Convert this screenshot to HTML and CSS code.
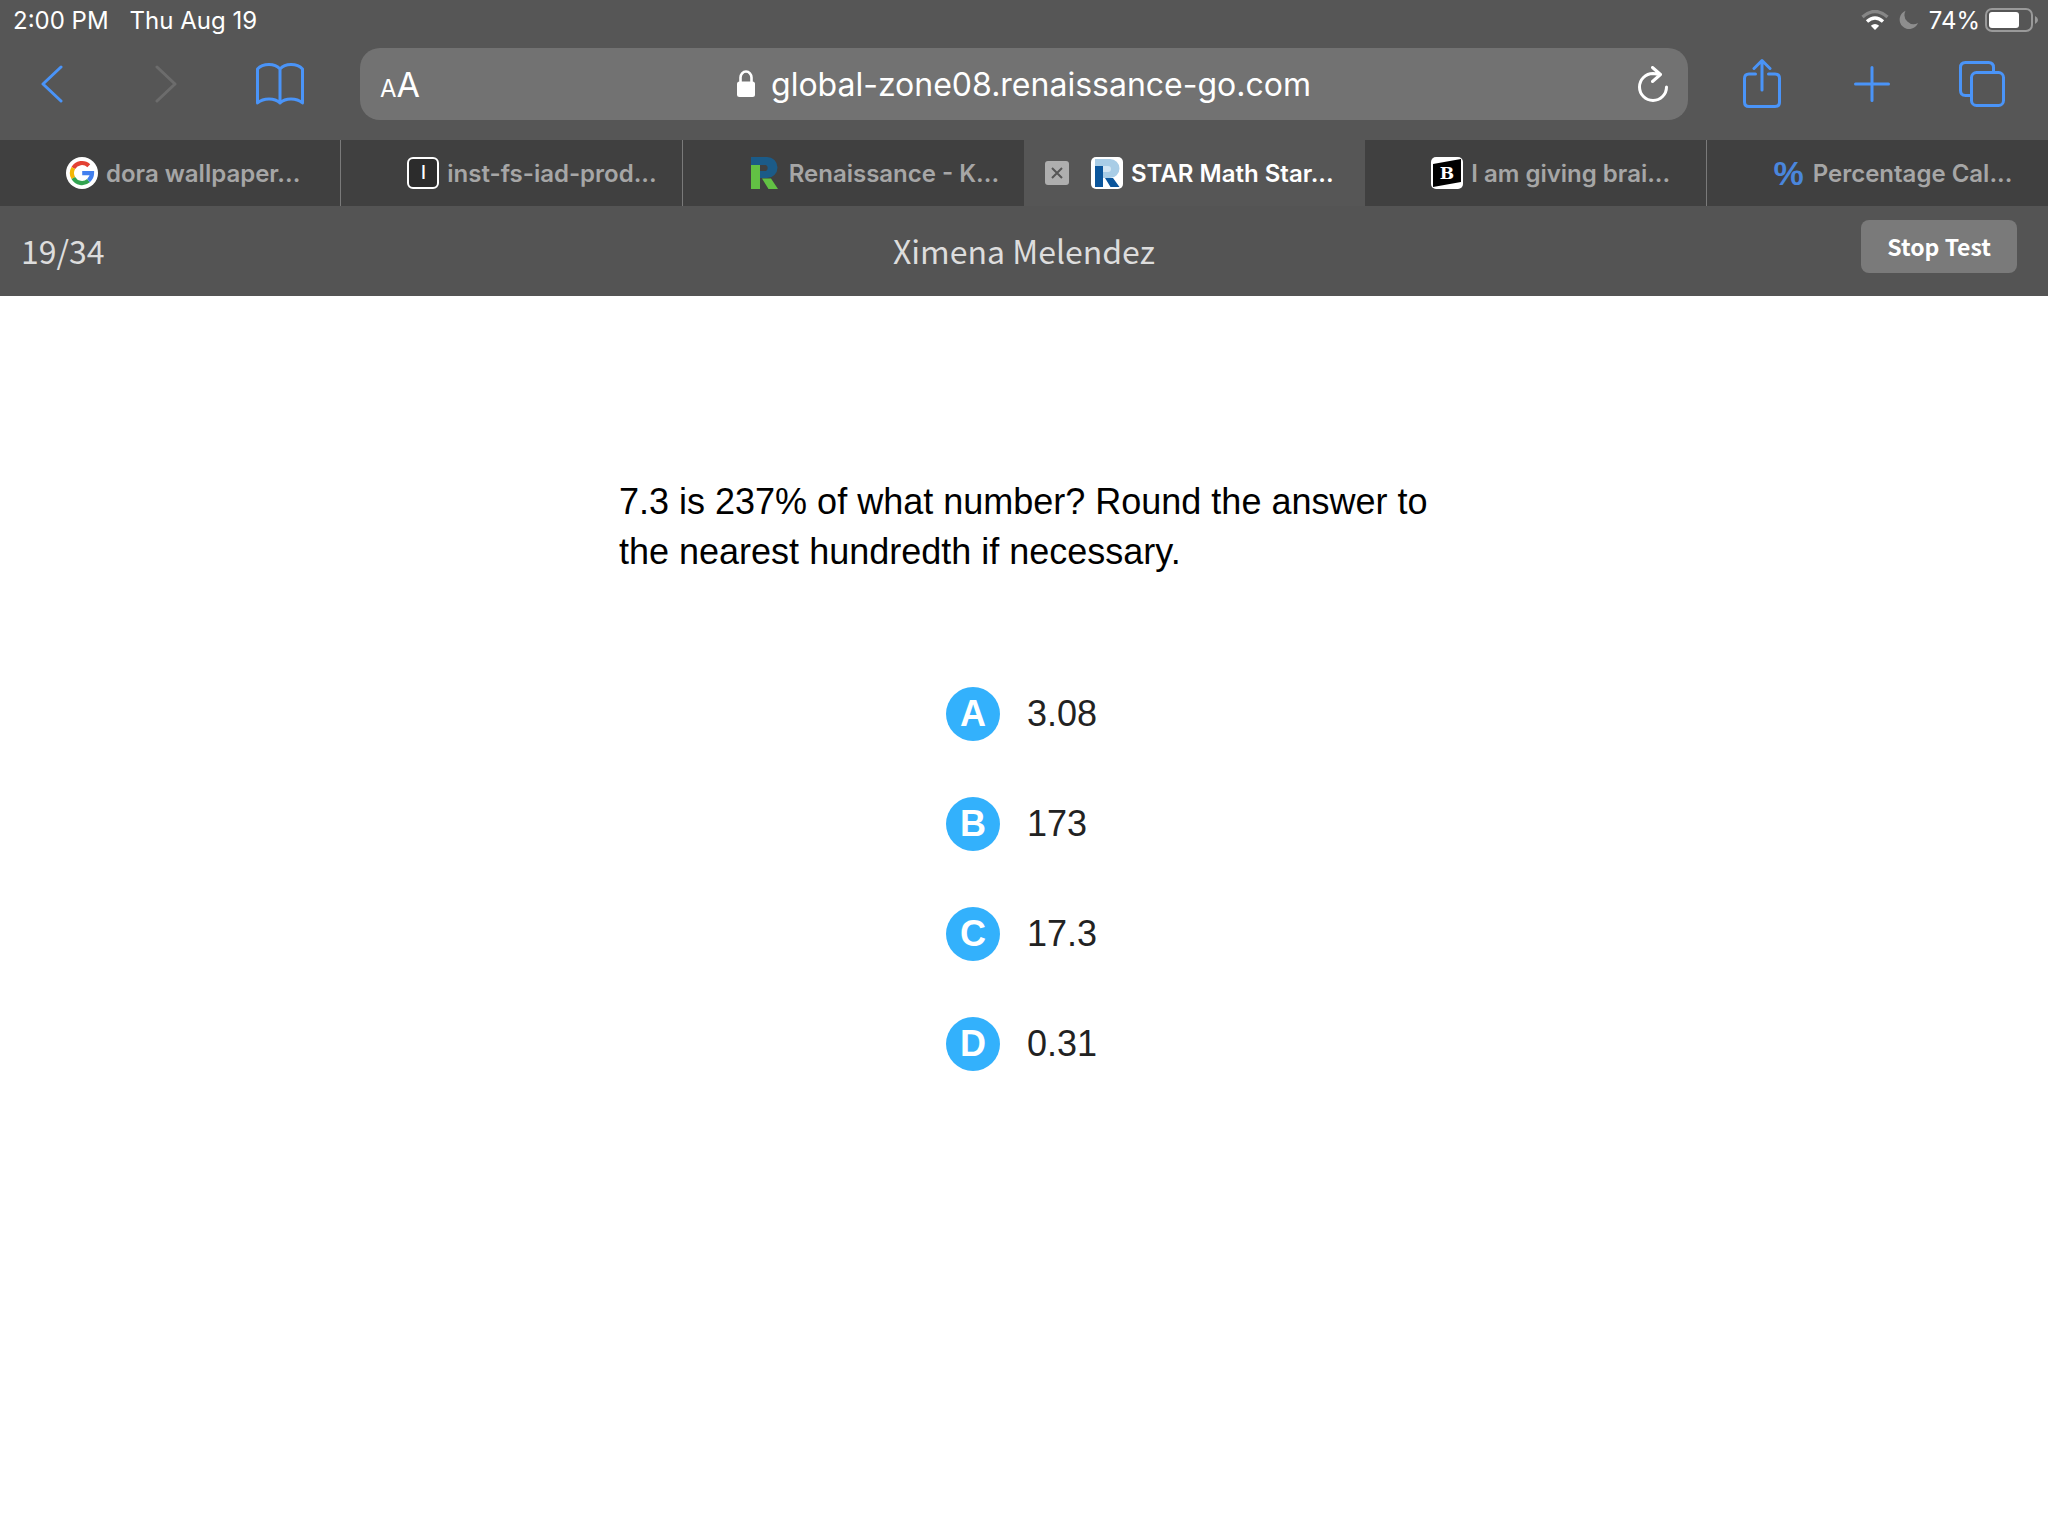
FILE: index.html
```
<!DOCTYPE html>
<html lang="en">
<head>
    <meta charset="UTF-8">
    <title>STAR Math</title>
    <link rel="stylesheet" href="styles.css">
</head>
<body>
    <div class="status-bar">
        <span>2:00 PM</span>
        <span>Thu Aug 19</span>
        <div class="status-icons">
            <svg width="28" height="20" viewBox="0 0 28 20">
                <path d="M1.500 7 Q14 -4 26.500 7" fill="none" stroke="#868686" stroke-width="3.400"/>
                <path d="M6 11.500 Q14 4.500 22 11.500" fill="none" stroke="#fff" stroke-width="3.400"/>
                <path d="M14 20 L9.800 15.800 Q14 12.200 18.200 15.800 Z" fill="#fff"/>
            </svg>
            <svg width="20" height="20" viewBox="0 0 20 20">
                <path d="M6.500 .8 A9.500 9.500 0 1 0 19 13 A9.200 9.200 0 0 1 6.500 .8 Z" fill="#8e8e8e"/>
            </svg>
            <span class="battery-level">74%</span>
            <svg width="54" height="24" viewBox="0 0 54 24">
                <rect x="1" y="1" width="46" height="22" rx="6" fill="none" stroke="#9a9a9a" stroke-width="2"/>
                <rect x="4" y="4" width="30" height="16" rx="3" fill="#fff"/>
                <path d="M50 8 Q53 9.500 53 12 Q53 14.500 50 16 Z" fill="#9a9a9a"/>
            </svg>
        </div>
    </div>

    <div class="toolbar">
        <div class="toolbar-group">
            <button class="tool-btn" title="Back">
                <svg width="22" height="38" viewBox="0 0 22 38"><path d="M20 2 L2 19 L20 36"/></svg>
            </button>
            <button class="tool-btn" title="Forward" disabled>
                <svg width="22" height="38" viewBox="0 0 22 38"><path d="M2 2 L20 19 L2 36"/></svg>
            </button>
            <button class="tool-btn" title="Bookmarks">
                <svg width="48" height="42" viewBox="0 0 48 42">
                    <path d="M24 40 V6 Q20 1.500 13 1.500 Q5.500 1.500 1.500 6 V40 Q6 36 13 36 Q20 36 24 40 Q28 36 35 36 Q42 36 46.500 40 V6 Q42.500 1.500 35 1.500 Q28 1.500 24 6"/>
                </svg>
            </button>
        </div>
        <form class="address-bar">
            <button class="address-btn" type="button" title="Text size"><span class="small-a">A</span>A</button>
            <div class="address">
                <svg width="18" height="28" viewBox="0 0 18 28">
                    <path d="M3.500 13 V7.500 A5.500 6 0 0 1 14.500 7.500 V13" fill="none" stroke="#fff" stroke-width="2.600"/>
                    <rect x="0" y="11.500" width="18" height="15.500" rx="2.500" fill="#fff"/>
                </svg>
                <input class="address-input" type="text" aria-label="Address" value="global-zone08.renaissance-go.com">
            </div>
            <button class="address-btn reload" type="button" title="Reload">
                <svg width="30" height="36" viewBox="0 0 30 36">
                    <path d="M28.500 21 A13.500 13.500 0 1 1 15 7.500 L22 8.500 M14.500 1.500 L22.500 8.500 L14.500 15.500"/>
                </svg>
            </button>
        </form>
        <div class="toolbar-group right">
            <button class="tool-btn" title="Share">
                <svg width="38" height="52" viewBox="0 0 38 52">
                    <path d="M12.500 16 H6 Q1.500 16 1.500 20.500 V44 Q1.500 48.500 6 48.500 H32 Q36.500 48.500 36.500 44 V20.500 Q36.500 16 32 16 H25.500 M19 32 V3 M11 10.500 L19 2.500 L27 10.500"/>
                </svg>
            </button>
            <button class="tool-btn" title="New tab">
                <svg width="36" height="36" viewBox="0 0 36 36"><path d="M18 1.500 V34.500 M1.500 18 H34.500"/></svg>
            </button>
            <button class="tool-btn" title="Show tabs">
                <svg width="46" height="46" viewBox="0 0 46 46">
                    <path d="M12 34.500 H6.500 Q1.500 34.500 1.500 29.500 V6.500 Q1.500 1.500 6.500 1.500 H29.500 Q34.500 1.500 34.500 6.500 V11.500"/>
                    <rect x="12.500" y="11.500" width="32" height="33" rx="5"/>
                </svg>
            </button>
        </div>
    </div>

    <nav class="tabs">
        <div class="tab">
            <a class="tab-link" href="#">
                <svg width="32" height="32" viewBox="0 0 32 32">
                    <circle cx="16" cy="16" r="16" fill="#fff"/>
                    <g fill="none" stroke-width="4.200">
                        <path d="M7.300 11 A10 10 0 0 1 22.800 8.700" stroke="#e34133"/>
                        <path d="M7.300 21 A10 10 0 0 1 7.300 11" stroke="#f3b605"/>
                        <path d="M22.500 23.600 A10 10 0 0 1 7.300 21" stroke="#32a350"/>
                        <path d="M16.200 16.200 H26 A10 10 0 0 1 22.500 23.600" stroke="#4280ef"/>
                    </g>
                </svg>
                <span>dora wallpaper...</span>
            </a>
        </div>
        <div class="tab">
            <a class="tab-link" href="#">
                <span class="letter-icon">I</span>
                <span>inst-fs-iad-prod...</span>
            </a>
        </div>
        <div class="tab before-active">
            <a class="tab-link" href="#">
                <svg width="32" height="32" viewBox="0 0 32 32">
                    <path d="M2 0 H18 A10.500 10.500 0 0 1 18 21 H11 V14 H17 A3.500 3.500 0 0 0 17 8 H2 Z" fill="#1b5b88"/>
                    <path d="M2 8 H11 V32 H2 Z M13 21.500 H22 L29 32 H19.500 Z" fill="#62c144"/>
                </svg>
                <span>Renaissance - K...</span>
            </a>
        </div>
        <div class="tab active">
            <button class="tab-close" title="Close tab">
                <svg width="24" height="24" viewBox="0 0 24 24"><path d="M7 7 L17 17 M17 7 L7 17"/></svg>
            </button>
            <a class="tab-link" href="#">
                <svg width="32" height="32" viewBox="0 0 32 32">
                    <rect width="32" height="32" rx="5" fill="#fff"/>
                    <path d="M4 2 H19 A9.500 9.500 0 0 1 19 21 H12 V9 H4 Z" fill="#a9cde6"/>
                    <path d="M12 9 H17 A3 3 0 0 1 17 15 H12 Z" fill="#d3e6f3"/>
                    <path d="M4 9 H12 V30 H4 Z M14 21 H22 L28.500 30 H19.500 Z" fill="#0b569c"/>
                </svg>
                <span>STAR Math Star...</span>
            </a>
        </div>
        <div class="tab">
            <a class="tab-link" href="#">
                <svg width="32" height="32" viewBox="0 0 32 32">
                    <rect width="32" height="32" rx="5" fill="#fff"/>
                    <path d="M2 7 L30 2 V25 L2 30 Z" fill="#000"/>
                    <text class="brand-b" x="16" y="22" text-anchor="middle">B</text>
                </svg>
                <span>I am giving brai...</span>
            </a>
        </div>
        <div class="tab">
            <a class="tab-link" href="#">
                <span class="percent-icon">%</span>
                <span>Percentage Cal...</span>
            </a>
        </div>
    </nav>

    <header class="test-header">
        <span>19/34</span>
        <span>Ximena Melendez</span>
        <button class="stop-btn">Stop Test</button>
    </header>

    <main class="test">
        <p class="question">7.3 is 237% of what number? Round the answer to the nearest hundredth if necessary.</p>
        <div class="answers">
            <button class="answer"><span class="answer-letter">A</span>3.08</button>
            <button class="answer"><span class="answer-letter">B</span>173</button>
            <button class="answer"><span class="answer-letter">C</span>17.3</button>
            <button class="answer"><span class="answer-letter">D</span>0.31</button>
        </div>
    </main>
</body>
</html>
```

FILE: styles.css
```
* {
    box-sizing: border-box;
}
body {
    margin: 0;
    background: #fff;
    font-family: Inter, "Liberation Sans", sans-serif;
}
button {
    border: none;
    background: none;
    padding: 0;
    font-family: inherit;
    cursor: pointer;
}
svg {
    display: block;
    flex: none;
}

/* Status bar */
.status-bar {
    display: flex;
    align-items: center;
    gap: 21px;
    height: 40px;
    padding: 0 9px 0 13px;
    background: #565656;
    color: #fff;
    font-size: 24px;
}
.status-icons {
    display: flex;
    align-items: center;
    gap: 10px;
    margin-left: auto;
}
.battery-level {
    margin-right: -5px;
}

/* Browser toolbar */
.toolbar {
    display: flex;
    align-items: center;
    height: 100px;
    padding: 0 14px 12px 0;
    background: #565656;
}
.toolbar-group {
    display: flex;
    gap: 10px;
    margin-right: 28px;
}
.toolbar-group.right {
    gap: 6px;
    margin: 0 0 0 22px;
}
.tool-btn {
    display: flex;
    align-items: center;
    justify-content: center;
    width: 104px;
    height: 72px;
}
.tool-btn path, .tool-btn rect {
    fill: none;
    stroke: #4a94f8;
    stroke-width: 3;
    stroke-linecap: round;
    stroke-linejoin: round;
}
.tool-btn:disabled path {
    stroke: #6c6c6c;
}
.address-bar {
    flex: 1;
    display: grid;
    grid-template-columns: 1fr auto 1fr;
    align-items: center;
    height: 72px;
    padding: 0 20px;
    background: #727272;
    border-radius: 20px;
}
.address-btn {
    justify-self: start;
    color: #fff;
    font-size: 34px;
}
.small-a {
    font-size: 24px;
}
.reload {
    justify-self: end;
}
.reload path {
    fill: none;
    stroke: #fff;
    stroke-width: 3;
    stroke-linecap: round;
    stroke-linejoin: round;
}
.address {
    display: flex;
    align-items: center;
    gap: 16px;
}
.address-input {
    field-sizing: content;
    border: none;
    padding: 0;
    background: none;
    color: #fff;
    font-family: inherit;
    font-size: 32px;
    outline: none;
}

/* Tabs */
.tabs {
    display: grid;
    grid-template-columns: repeat(6, 1fr);
    height: 66px;
    background: #404040;
}
.tab {
    display: flex;
    align-items: center;
    min-width: 0;
    padding-left: 66px;
    border-right: 1px solid #7a7a7a;
}
.tab.before-active, .tab.active, .tab:last-child {
    border-right: none;
}
.tab.active {
    gap: 22px;
    padding-left: 21px;
    background: #565656;
}
.tab-link {
    display: flex;
    align-items: center;
    gap: 8px;
    color: #a6a6a6;
    font-size: 24px;
    font-weight: 600;
    text-decoration: none;
    white-space: nowrap;
}
.tab.active .tab-link {
    color: #fff;
}
.tab-close {
    background: #aeaeae;
    border-radius: 3px;
}
.tab-close path {
    stroke: #565656;
    stroke-width: 2;
}
.letter-icon {
    width: 32px;
    height: 32px;
    border: 2px solid #fff;
    border-radius: 6px;
    background: #2c2c2c;
    color: #fff;
    font-size: 18px;
    font-weight: 500;
    line-height: 28px;
    text-align: center;
}
.brand-b {
    fill: #fff;
    font-family: "DejaVu Serif", serif;
    font-size: 17px;
    font-weight: bold;
}
.percent-icon {
    width: 32px;
    color: #4a86dc;
    font-family: "Liberation Sans", Arial, sans-serif;
    font-size: 34px;
    font-weight: bold;
    line-height: 32px;
    text-align: center;
}

/* Test header */
.test-header {
    display: grid;
    grid-template-columns: 1fr auto 1fr;
    align-items: center;
    height: 90px;
    padding: 0 21px 2px;
    background: #545454;
    color: #ddd;
    font-family: "Noto Sans CJK SC", "Open Sans", sans-serif;
    font-size: 32px;
}
.stop-btn {
    align-self: start;
    justify-self: end;
    height: 53px;
    margin: 14px 10px 0 0;
    padding: 0 26px 2px;
    background: #7a7a7a;
    border-radius: 8px;
    color: #fff;
    font-size: 23px;
    font-weight: bold;
}

/* Question */
.test {
    padding: 181px 20px 80px;
    font-family: "Liberation Sans", Arial, sans-serif;
    font-size: 36px;
}
.question {
    max-width: 810px;
    margin: 0 auto 110px;
    color: #000;
    line-height: 50px;
}
.answers {
    display: flex;
    flex-direction: column;
    gap: 56px;
    width: 156px;
    margin: 0 auto;
}
.answer {
    display: flex;
    align-items: center;
    gap: 27px;
    color: #222;
    font-size: 36px;
}
.answer-letter {
    width: 54px;
    height: 54px;
    border-radius: 50%;
    background: #33b1fc;
    color: #fff;
    font-weight: bold;
    line-height: 53px;
}
```
